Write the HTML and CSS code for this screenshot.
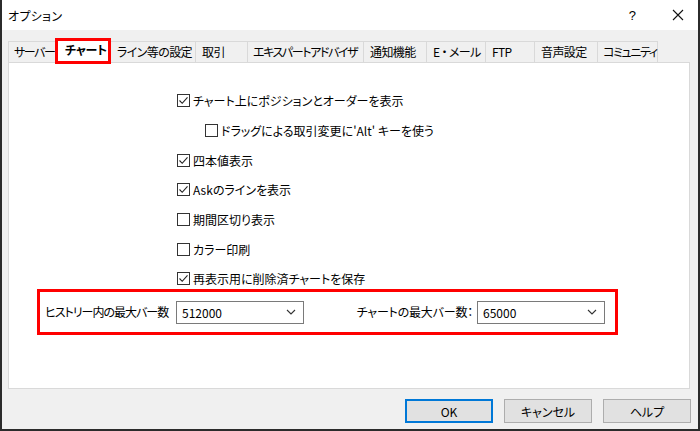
FILE: index.html
```html
<!DOCTYPE html>
<html lang="ja">
<head>
<meta charset="utf-8">
<title>オプション</title>
<link rel="stylesheet" href="styles.css">
</head>
<body>
<div class="window">
  <div class="titlebar">
    <span class="title">オプション</span>
    <span class="help-q">?</span>
    <svg class="close-x" width="12" height="12" viewBox="0 0 12 12"><path d="M1 1L11 11M11 1L1 11" stroke="#111" stroke-width="1.1" fill="none"/></svg>
  </div>
  <div class="content">
    <div class="tabs">
      <div class="tab w-server tight">サーバー</div>
      <div class="tab active w-chart">チャート</div>
      <div class="tab w-line">ライン等の設定</div>
      <div class="tab w-trade">取引</div>
      <div class="tab w-ea tight">エキスパートアドバイザ</div>
      <div class="tab w-notify">通知機能</div>
      <div class="tab w-mail">E ・ メール</div>
      <div class="tab w-ftp">FTP</div>
      <div class="tab w-sound">音声設定</div>
      <div class="tab w-comm tight">コミュニティ</div>
    </div>
    <div class="pane">
      <div class="checks">
        <label class="check"><span class="box on"><svg viewBox="0 0 13 13" width="13" height="13"><path d="M2.5 6.5L5.2 9.3L10.5 3.3" stroke="#222" stroke-width="1.1" fill="none"/></svg></span><span>チャート上にポジションとオーダーを表示</span></label>
        <label class="check indent"><span class="box"></span><span>ドラッグによる取引変更に'Alt' キーを使う</span></label>
        <label class="check"><span class="box on"><svg viewBox="0 0 13 13" width="13" height="13"><path d="M2.5 6.5L5.2 9.3L10.5 3.3" stroke="#222" stroke-width="1.1" fill="none"/></svg></span><span>四本値表示</span></label>
        <label class="check"><span class="box on"><svg viewBox="0 0 13 13" width="13" height="13"><path d="M2.5 6.5L5.2 9.3L10.5 3.3" stroke="#222" stroke-width="1.1" fill="none"/></svg></span><span>Askのラインを表示</span></label>
        <label class="check"><span class="box"></span><span>期間区切り表示</span></label>
        <label class="check"><span class="box"></span><span>カラー印刷</span></label>
        <label class="check"><span class="box on"><svg viewBox="0 0 13 13" width="13" height="13"><path d="M2.5 6.5L5.2 9.3L10.5 3.3" stroke="#222" stroke-width="1.1" fill="none"/></svg></span><span>再表示用に削除済チャートを保存</span></label>
      </div>
      <div class="limits">
        <div class="field">
          <span class="label first">ヒストリー内の最大バー数</span>
          <div class="select"><span>512000</span><svg width="10" height="6" viewBox="0 0 10 6"><path d="M1 1L5 5L9 1" stroke="#333" stroke-width="1.1" fill="none"/></svg></div>
        </div>
        <div class="field right">
          <span class="label">チャートの最大バー数：</span>
          <div class="select"><span>65000</span><svg width="10" height="6" viewBox="0 0 10 6"><path d="M1 1L5 5L9 1" stroke="#333" stroke-width="1.1" fill="none"/></svg></div>
        </div>
      </div>
    </div>
    <div class="buttons">
      <button class="btn default">OK</button>
      <button class="btn">キャンセル</button>
      <button class="btn">ヘルプ</button>
    </div>
  </div>
</div>
</body>
</html>
```
FILE: styles.css
```css
* { box-sizing: border-box; }
html, body {
  margin: 0;
  padding: 0;
  width: 700px;
  height: 431px;
  overflow: hidden;
  background: #f0f0f0;
}
body {
  font-family: "Noto Sans CJK JP", "Noto Sans", sans-serif;
  font-size: 12px;
  font-feature-settings: "palt" 1;
  color: #000;
}
.window {
  width: 700px;
  height: 431px;
  border-left: 2px solid #2b2b2b;
  border-right: 2px solid #2b2b2b;
  border-bottom: 2px solid #2b2b2b;
  display: flex;
  flex-direction: column;
  background: #f0f0f0;
}
.titlebar {
  height: 30px;
  background: #fff;
  display: flex;
  align-items: center;
  padding-left: 6px;
  flex: none;
}
.title { font-size: 12px; letter-spacing: 0.3px; }
.help-q {
  margin-left: auto;
  font-family: "Liberation Sans", sans-serif;
  font-size: 13px;
  margin-right: 36px;
}
.close-x { margin-right: 14px; }
.content {
  flex: 1;
  padding: 8px 8px 0 6px;
  display: flex;
  flex-direction: column;
}
.tabs {
  display: flex;
  align-items: flex-end;
  height: 24px;
  position: relative;
  z-index: 2;
}
.tab {
  height: 21px;
  border: 1px solid #d9d9d9;
  border-bottom: none;
  border-right: none;
  background: #f0f0f0;
  padding-left: 6px;
  line-height: 19px;
  white-space: nowrap;
  font-size: 12px;
  letter-spacing: -0.6px;
  flex: none;
}
.tab.tight { letter-spacing: -1.4px; padding-left: 5px; }
.tab:last-child { border-right: 1px solid #d9d9d9; }
.tab.active {
  height: 25px;
  background: #fff;
  padding-left: 9px;
  line-height: 21px;
  font-weight: bold;
  letter-spacing: -0.3px;
  margin-bottom: -1px;
  position: relative;
  border-right: 1px solid #d9d9d9;
}
.tab.active + .tab { border-left: none; }
.tab.active::after {
  content: "";
  position: absolute;
  left: -1px;
  top: -1px;
  right: -1px;
  bottom: -1px;
  border: 3px solid #ff0000;
}
.w-server { width: 47px; }
.w-chart { width: 56px; }
.w-line { width: 84px; }
.w-trade { width: 52px; }
.w-ea { width: 116px; }
.w-notify { width: 63px; }
.w-mail { width: 59px; }
.w-ftp { width: 49px; }
.w-sound { width: 63px; }
.w-comm { width: 61px; }
.pane {
  height: 327px;
  background: #fff;
  border: 1px solid #d9d9d9;
  padding-top: 23px;
  display: flex;
  flex-direction: column;
}
.checks {
  padding-left: 168px;
  display: flex;
  flex-direction: column;
}
.check {
  height: 29.7px;
  display: flex;
  align-items: center;
  gap: 3px;
  white-space: nowrap;
}
.check.indent { margin-left: 28px; }
.box {
  width: 13px;
  height: 13px;
  border: 1px solid #333;
  background: #fff;
  flex: none;
  position: relative;
}
.box svg { position: absolute; left: -1px; top: -1px; }
.limits {
  margin-top: -5px;
  margin-left: 28px;
  width: 581px;
  height: 46px;
  border: 3px solid #ff0000;
  display: flex;
  align-items: center;
  padding: 0 10px 0 5px;
}
.field { display: flex; align-items: center; }
.field.right { margin-left: auto; gap: 4px; }
.label { white-space: nowrap; letter-spacing: -0.2px; }
.label.first { width: 131px; flex: none; letter-spacing: -1px; }
.select {
  width: 128px;
  height: 23px;
  border: 1px solid #7a7a7a;
  background: #fff;
  display: flex;
  align-items: center;
  justify-content: space-between;
  padding: 0 7px 0 5px;
  margin-top: 1px;
  flex: none;
}
.buttons {
  display: flex;
  justify-content: flex-end;
  gap: 11px;
  margin-top: 10px;
  margin-right: -1px;
}
.btn {
  width: 88px;
  height: 24px;
  background: #e1e1e1;
  border: 1px solid #adadad;
  font-family: "Noto Sans CJK JP", "Noto Sans", sans-serif;
  font-feature-settings: "palt" 1;
  font-size: 12px;
  color: #000;
  padding: 0;
}
.btn.default { border: 2px solid #0078d7; }
```
